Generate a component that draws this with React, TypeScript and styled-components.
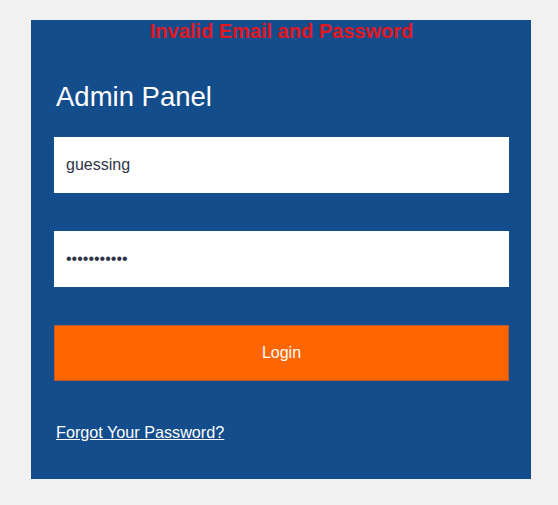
import React from "react";
import styled, { createGlobalStyle } from "styled-components";

const Global = createGlobalStyle`
  html, body { margin: 0; padding: 0; background: #f1f1f1; }
  body { font-family: "Liberation Sans", Arial, sans-serif; }
`;

const Page = styled.div`
  width: 558px;
  height: 505px;
  padding: 20px 0 0 31px;
  box-sizing: border-box;
`;

const Panel = styled.form`
  width: 500px;
  height: 459px;
  box-sizing: border-box;
  background: #134d8c;
  display: flex;
  flex-direction: column;
  align-items: stretch;
  padding: 0 22px 0 23px;
`;

const ErrorText = styled.div`
  color: #e3171f;
  font-weight: bold;
  font-size: 20px;
  line-height: 23px;
  text-align: center;
  height: 23px;
`;

const Title = styled.h1`
  margin: 38px 0 0 2px;
  font-size: 27.5px;
  font-weight: normal;
  line-height: 32px;
  color: #ffffff;
`;

const Field = styled.input<{ $top: number }>`
  margin-top: ${(p) => p.$top}px;
  height: 56px;
  box-sizing: border-box;
  border: none;
  outline: none;
  background: #ffffff;
  padding: 0 12px;
  font-family: "Liberation Sans", Arial, sans-serif;
  font-size: 16px;
  color: #2f3547;
`;

const Button = styled.button`
  margin-top: 38px;
  height: 56px;
  box-sizing: border-box;
  border: 1px solid #c45a2a;
  background: #ff6600;
  color: #ffffff;
  font-family: "Liberation Sans", Arial, sans-serif;
  font-size: 16px;
  cursor: pointer;
`;

const Forgot = styled.a`
  margin: 42px 0 0 2px;
  align-self: flex-start;
  color: #ffffff;
  font-size: 16.2px;
  line-height: 18px;
  text-decoration: underline;
`;

export default function App() {
  return (
    <Page>
      <Global />
      <Panel onSubmit={(e) => e.preventDefault()}>
        <ErrorText>Invalid Email and Password</ErrorText>
        <Title>Admin Panel</Title>
        <Field $top={24} type="text" defaultValue="guessing" />
        <Field $top={38} type="password" defaultValue="guessing123" />
        <Button type="submit">Login</Button>
        <Forgot href="#">Forgot Your Password?</Forgot>
      </Panel>
    </Page>
  );
}
